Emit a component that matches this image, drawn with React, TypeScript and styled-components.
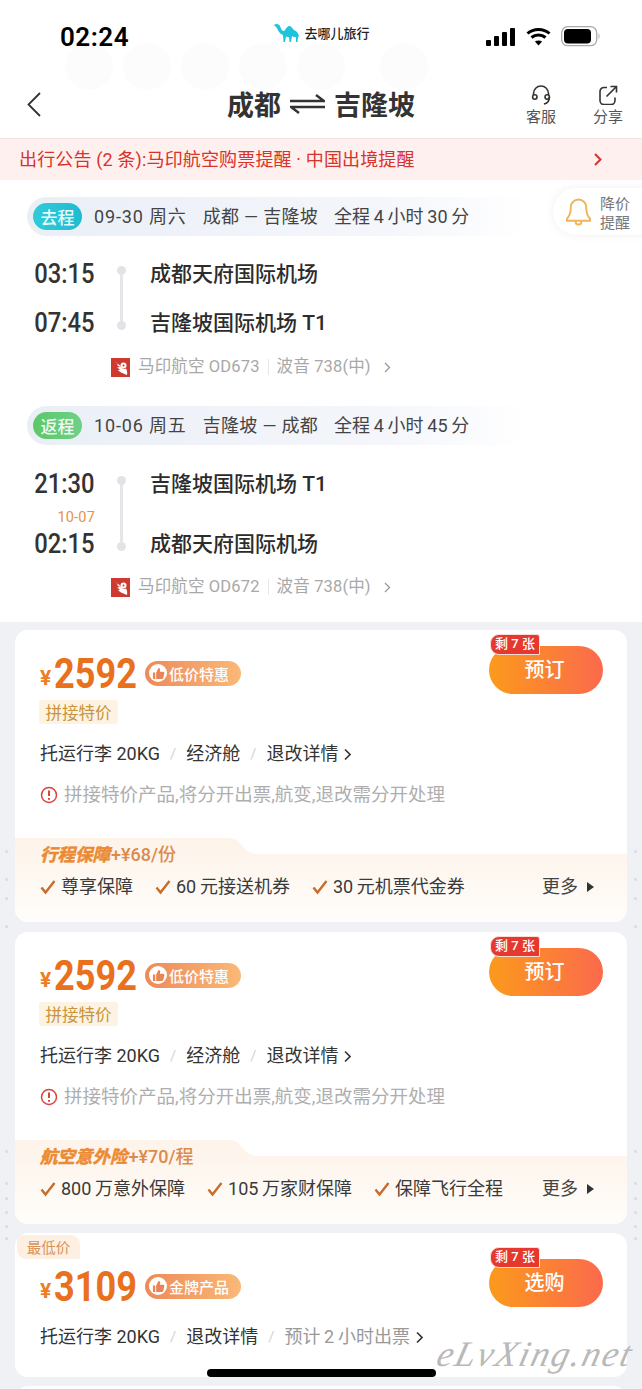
import React from "react";
import styled, { createGlobalStyle } from "styled-components";

const Global = createGlobalStyle`
  html, body { margin: 0; padding: 0; background: #fff; }
  body { font-family: Roboto, "Noto Sans CJK SC", sans-serif; -webkit-font-smoothing: antialiased; }
  * { box-sizing: border-box; }
`;

const Page = styled.div`
  position: relative;
  width: 642px;
  height: 1389px;
  overflow: hidden;
  background: #fff;
`;
const StatusBar = styled.div`
  position: relative;
  height: 60px;
  padding: 20px 41px 0 60px;
  display: flex;
  justify-content: space-between;
  align-items: flex-start;
`;
const Clock = styled.div`
  position: relative;
  font: 600 26px/34px Roboto, sans-serif;
  color: #000;
  letter-spacing: 0.5px;
`;
const Brand = styled.div`
  position: relative;
  display: flex;
  align-items: center;
  gap: 4px;
  margin: 2px 0 0 29px;
  font: 500 13px/22px "Noto Sans CJK SC", sans-serif;
  color: #222;
`;
const StatusIcons = styled.div`
  position: relative;
  display: flex;
  align-items: center;
  gap: 10px;
  padding-top: 6px;
`;
const Bubbles = styled.div`
  position: absolute;
  left: 65px;
  top: 43px;
  display: flex;
  gap: 10px;
`;
const Bubble = styled.div<{ $far?: boolean }>`
  width: 48px;
  height: 47px;
  border-radius: 50%;
  background: #fcfcfc;
  margin-left: ${(p) => (p.$far ? 25 : 0)}px;
`;
const Nav = styled.div`
  height: 78px;
  position: relative;
  display: flex;
  align-items: center;
  padding: 0 19px 0 27px;
`;
const BackIcon = styled.svg`
  margin-top: 10px;
  flex: none;
`;
const NavTitle = styled.div`
  flex: 1;
  display: flex;
  justify-content: center;
  align-items: center;
  gap: 9px;
  margin: 9px 0 0 112px;
  font: 700 27px/34px "Noto Sans CJK SC", sans-serif;
  color: #333;
`;
const NavAction = styled.div`
  width: 30px;
  margin-left: 37px;
  margin-top: 12px;
  display: flex;
  flex-direction: column;
  align-items: center;
  gap: 2px;
  font: 400 15px/18px "Noto Sans CJK SC", sans-serif;
  color: #555;
  white-space: nowrap;
`;
const Notice = styled.div`
  height: 42px;
  border-top: 1px solid #f3e2df;
  background: #fdf0ee;
  padding: 0 40px 0 19px;
  display: flex;
  align-items: center;
  justify-content: space-between;
  font: 400 18px/24px Roboto, "Noto Sans CJK SC", sans-serif;
  letter-spacing: 0.15px;
  color: #d8322c;
`;
const Trip = styled.div`
  position: relative;
  height: 442px;
  padding-top: 17px;
`;
const Pill = styled.div<{ $mt?: number }>`
  height: 39px;
  margin: ${(p) => p.$mt ?? 0}px 112px 0 27px;
  border-radius: 20px 0 0 20px;
  background: linear-gradient(90deg, #eaeff6 0%, #f4f6fb 70%, #ffffff 100%);
  display: flex;
  align-items: center;
  padding-left: 6px;
  font: 400 18px/24px Roboto, "Noto Sans CJK SC", sans-serif;
  color: #444;
  white-space: nowrap;
`;
const Badge = styled.span<{ $from: string; $to: string }>`
  width: 49px;
  height: 27px;
  border-radius: 14px;
  background: linear-gradient(90deg, ${(p) => p.$from}, ${(p) => p.$to});
  color: rgba(255, 255, 255, 0.92);
  text-align: center;
  font: 500 17px/27px "Noto Sans CJK SC", sans-serif;
  margin-right: 12px;
`;
const PillDate = styled.span`
  margin-right: 16px;
  letter-spacing: 0.85px;
`;
const PillRoute = styled.span`
  margin-right: 16px;
  letter-spacing: 0.3px;
`;
const Leg = styled.div<{ $h: number; $mt: number }>`
  height: ${(p) => p.$h}px;
  margin-top: ${(p) => p.$mt}px;
  display: flex;
`;
const Times = styled.div`
  position: relative;
  width: 95px;
  display: flex;
  flex-direction: column;
  justify-content: space-between;
  align-items: flex-end;
`;
const TimeText = styled.span`
  display: inline-block;
  transform: scaleX(0.88);
  transform-origin: right center;
  font: 500 27px/26px Roboto, sans-serif;
  color: #333;
`;
const NextDay = styled.span`
  position: absolute;
  right: 0;
  top: 39px;
  font: 400 14.5px/16px Roboto, sans-serif;
  color: #ea9147;
  letter-spacing: 0.2px;
`;
const Rail = styled.div`
  width: 12px;
  margin: 5px 0 6px 20px;
  display: flex;
  flex-direction: column;
  align-items: center;
`;
const Dot = styled.i`
  width: 9px;
  height: 9px;
  flex: none;
  border-radius: 50%;
  background: #e1e3e6;
`;
const RailLine = styled.i`
  flex: 1;
  width: 3px;
  background: #e4e6e9;
`;
const Names = styled.div`
  margin-left: 23px;
  display: flex;
  flex-direction: column;
  justify-content: space-between;
  font: 500 21px/26px Roboto, "Noto Sans CJK SC", sans-serif;
  color: #2c2c2c;
`;
const Meta = styled.div<{ $mt: number }>`
  margin: ${(p) => p.$mt}px 0 0 111px;
  height: 24px;
  display: flex;
  align-items: center;
  font: 400 16.5px/24px Roboto, "Noto Sans CJK SC", sans-serif;
  letter-spacing: 0.15px;
  color: #a8a8a8;
  white-space: nowrap;
`;
const AirlineName = styled.span`
  margin-left: 8px;
`;
const MetaDivider = styled.i`
  width: 1px;
  height: 16px;
  background: #e6e6e6;
  margin: 0 8px;
`;
const MetaChev = styled.svg`
  margin-left: 13px;
`;
const Remind = styled.div`
  position: absolute;
  left: 553px;
  top: 8px;
  width: 100px;
  height: 47px;
  border-radius: 24px 0 0 24px;
  background: #fff;
  box-shadow: 0 0 8px rgba(120, 120, 120, 0.12);
  display: flex;
  align-items: center;
  padding-left: 12px;
  gap: 8px;
  font: 400 15px/19px "Noto Sans CJK SC", sans-serif;
  color: #777;
`;
const List = styled.div`
  position: relative;
  background: #eff1f5;
  height: 767px;
  padding: 8px 15px 0;
  display: flex;
  flex-direction: column;
  gap: 10px;
`;
const EdgeMark = styled.i<{ $y: number; $right?: boolean }>`
  position: absolute;
  top: ${(p) => p.$y}px;
  ${(p) => (p.$right ? "right: 5px;" : "left: 5px;")}
  width: 3px;
  height: 3px;
  border-radius: 50%;
  background: #d8dbe1;
`;
const Card = styled.div<{ $h: number; $shift?: number }>`
  position: relative;
  height: ${(p) => p.$h}px;
  margin-top: ${(p) => p.$shift ?? 0}px;
  flex: none;
  border-radius: 13px;
  background: #fff;
  overflow: hidden;
  padding: 0 24px 0 25px;
`;
const TopRow = styled.div<{ $pt: number }>`
  padding-top: ${(p) => p.$pt}px;
  display: flex;
  justify-content: space-between;
  align-items: flex-start;
`;
const PriceCol = styled.div`
  padding-top: 5px;
`;
const PriceRow = styled.div<{ $mt?: number }>`
  display: flex;
  align-items: center;
  height: 44px;
  margin-top: ${(p) => p.$mt ?? 0}px;
`;
const Yen = styled.span`
  width: 14px;
  font: 700 21px/24px Roboto, sans-serif;
  color: #ee7d24;
  margin-top: 9px;
`;
const AmountBox = styled.span`
  width: 81px;
  margin-right: 10px;
`;
const Amount = styled.span`
  display: inline-block;
  transform: scaleX(0.84);
  transform-origin: left center;
  font: 700 43px/44px Roboto, sans-serif;
  color: #e9701c;
`;
const Promo = styled.span`
  height: 25px;
  width: 96px;
  border-radius: 13px;
  padding-left: 4px;
  background: linear-gradient(90deg, #ee8a58, #f9b978);
  display: flex;
  align-items: center;
  gap: 2px;
  font: 500 15px/25px "Noto Sans CJK SC", sans-serif;
  color: #fff;
  white-space: nowrap;
`;
const PromoIcon = styled.span`
  width: 18px;
  height: 18px;
  flex: none;
  border-radius: 50%;
  background: #fff;
  display: flex;
  align-items: center;
  justify-content: center;
`;
const SubTag = styled.div`
  width: 79px;
  height: 24px;
  margin-top: 5px;
  margin-left: -1px;
  border-radius: 3px;
  background: #fdf3e3;
  color: #c8943c;
  text-align: center;
  font: 400 16.5px/24px "Noto Sans CJK SC", sans-serif;
`;
const Book = styled.div`
  position: relative;
  width: 114px;
  height: 48px;
  padding-right: 3px;
  border-radius: 24px;
  background: linear-gradient(90deg, #fb9a1c, #fb6a4c);
  color: #fff;
  text-align: center;
  font: 500 20px/46px "Noto Sans CJK SC", sans-serif;
`;
const Left = styled.span`
  position: absolute;
  left: 1px;
  top: -12px;
  width: 50px;
  height: 21px;
  border-radius: 9px 3px 0 9px;
  background: #e5392f;
  border: 1px solid #fbdcd7;
  color: #fff;
  font: 500 13px/18px Roboto, "Noto Sans CJK SC", sans-serif;
`;
const InfoRow = styled.div<{ $mt: number }>`
  margin-top: ${(p) => p.$mt}px;
  height: 26px;
  display: flex;
  align-items: center;
  font: 400 18px/26px Roboto, "Noto Sans CJK SC", sans-serif;
  color: #333;
  white-space: nowrap;
`;
const RowChev = styled.svg`
  margin-left: 6px;
`;
const Slash = styled.span`
  color: #d4d4d4;
  font-size: 15px;
  margin: 0 10px;
`;
const Faint = styled.span`
  color: #999;
`;
const WarnRow = styled.div`
  margin-top: 15px;
  height: 26px;
  display: flex;
  align-items: center;
  gap: 6px;
  font: 400 18.5px/26px Roboto, "Noto Sans CJK SC", sans-serif;
  color: #aeaeae;
  white-space: nowrap;
`;
const Cover = styled.div`
  position: absolute;
  left: 0;
  right: 0;
  bottom: 0;
  height: 85px;
  padding: 5px 33px 0 25px;
`;
const CoverShape = styled.svg`
  position: absolute;
  inset: 0;
  width: 100%;
  height: 100%;
`;
const CoverTitle = styled.div`
  position: relative;
  display: flex;
  align-items: center;
  height: 26px;
  font: 500 18px/26px Roboto, "Noto Sans CJK SC", sans-serif;
  color: #dc8a4a;
`;
const CoverName = styled.span`
  font-size: 17.5px;
  font-weight: 700;
  font-style: italic;
  color: #ec8a33;
  -webkit-text-stroke: 0.5px #ec8a33;
  margin-right: 1px;
`;
const CoverRow = styled.div`
  position: relative;
  margin-top: 6px;
  height: 26px;
  display: flex;
  align-items: center;
  font: 400 18px/26px Roboto, "Noto Sans CJK SC", sans-serif;
  color: #3a3a3a;
  white-space: nowrap;
`;
const Perk = styled.span`
  display: flex;
  align-items: center;
  gap: 5px;
  margin-right: 22px;
`;
const More = styled.span`
  margin-left: auto;
  display: flex;
  align-items: center;
  gap: 9px;
  color: #444;
`;
const Flag = styled.div`
  position: absolute;
  left: 2px;
  top: 2px;
  width: 63px;
  height: 24px;
  border-radius: 0 9px 0 9px;
  background: #fdf0e3;
  color: #d99258;
  text-align: center;
  font: 400 14.5px/24px "Noto Sans CJK SC", sans-serif;
`;
const HomeBar = styled.div`
  position: absolute;
  left: 207px;
  top: 1369px;
  width: 229px;
  height: 8px;
  border-radius: 4px;
  background: #000;
`;
const Watermark = styled.div`
  position: absolute;
  left: 438px;
  top: 1332px;
  transform: skewX(-14deg);
  font: italic 400 36px/44px "Liberation Serif", serif;
  letter-spacing: 2px;
  color: #b9b9b9;
  white-space: nowrap;
`;

const CheckMark = () => (
  <svg width="16" height="16" viewBox="0 0 16 16" fill="none" stroke="#c96c2b" strokeWidth="2.4">
    <path d="M1.500 8.500l4 5L14.500 2" />
  </svg>
);
const Thumb = () => (
  <svg width="13" height="13" viewBox="0 0 14 14" fill="#ec8354">
    <path d="M1 6h2.500v7H1zM4.500 6l2.500-5c1.400 0 2 1 1.800 2.300L8.500 5H12c1 0 1.500.8 1.300 1.700l-1.100 5c-.2.800-.8 1.300-1.600 1.300H4.500z" />
  </svg>
);
const AirlineLogo = () => (
  <svg width="19" height="19" viewBox="0 0 19 19">
    <rect width="19" height="19" fill="#cf3a30" />
    <circle cx="12.500" cy="7.500" r="3" fill="#fff" />
    <path d="M3 3l4 3-1 1 3 2-3 .5 3 2-2 .8 3 2.200 6 2.500c.5-3 0-5-1-6.500-2 1-5 0-6-3C7 6 5 4 3 3z" fill="#fff" />
    <circle cx="12.500" cy="7.500" r="1" fill="#cf3a30" />
  </svg>
);
const SmallChev = () => (
  <MetaChev width="7" height="11" viewBox="0 0 7 11" fill="none" stroke="#999" strokeWidth="1.300">
    <path d="M1 1l4.500 4.500L1 10" />
  </MetaChev>
);
const DarkChev = () => (
  <RowChev width="7" height="13" viewBox="0 0 7 13" fill="none" stroke="#333" strokeWidth="1.600">
    <path d="M1 1.500l5 5-5 5" />
  </RowChev>
);

const RouteLeg = ({ h, mt, dep, arr, next, from, to }: { h: number; mt: number; dep: string; arr: string; next?: string; from: string; to: string }) => (
  <Leg $h={h} $mt={mt}>
    <Times>
      <TimeText>{dep}</TimeText>
      {next && <NextDay>{next}</NextDay>}
      <TimeText>{arr}</TimeText>
    </Times>
    <Rail>
      <Dot />
      <RailLine />
      <Dot />
    </Rail>
    <Names>
      <span>{from}</span>
      <span>{to}</span>
    </Names>
  </Leg>
);

const Carrier = ({ mt, flight }: { mt: number; flight: string }) => (
  <Meta $mt={mt}>
    <AirlineLogo />
    <AirlineName>马印航空 {flight}</AirlineName>
    <MetaDivider />
    波音 738(中)
    <SmallChev />
  </Meta>
);

const PriceCard = ({ id, title, fee, perks }: { id: string; title: string; fee: string; perks: string[] }) => (
  <Card $h={292}>
    <TopRow $pt={16}>
      <PriceCol>
        <PriceRow>
          <Yen>¥</Yen>
          <AmountBox><Amount>2592</Amount></AmountBox>
          <Promo>
            <PromoIcon><Thumb /></PromoIcon>
            低价特惠
          </Promo>
        </PriceRow>
        <SubTag>拼接特价</SubTag>
      </PriceCol>
      <Book>
        <Left>剩 7 张</Left>
        预订
      </Book>
    </TopRow>
    <InfoRow $mt={17}>
      托运行李 20KG<Slash>/</Slash>经济舱<Slash>/</Slash>退改详情<DarkChev />
    </InfoRow>
    <WarnRow>
      <svg width="18" height="18" viewBox="0 0 18 18" fill="none">
        <circle cx="9" cy="9" r="7.500" stroke="#d8433b" strokeWidth="1.500" />
        <path d="M9 4.500v5.500M9 12v1.800" stroke="#d8433b" strokeWidth="2" />
      </svg>
      拼接特价产品,将分开出票,航变,退改需分开处理
    </WarnRow>
    <Cover>
      <CoverShape viewBox="0 0 612 85" preserveAspectRatio="none">
        <defs>
          <linearGradient id={id} x1="0" y1="0" x2="0" y2="1">
            <stop offset="0" stopColor="#fdf3e9" />
            <stop offset="1" stopColor="#fffdfb" />
          </linearGradient>
        </defs>
        <path d="M0 1H214c14 0 12 16 30 16H612V85H0z" fill={`url(#${id})`} />
      </CoverShape>
      <CoverTitle>
        <CoverName>{title}</CoverName>
        {fee}
      </CoverTitle>
      <CoverRow>
        {perks.map((t) => (
          <Perk key={t}>
            <CheckMark />
            {t}
          </Perk>
        ))}
        <More>
          更多
          <svg width="7" height="10" viewBox="0 0 7 10" fill="#333"><path d="M0 0l7 5-7 5z" /></svg>
        </More>
      </CoverRow>
    </Cover>
  </Card>
);

const marks = [228, 256, 275, 303, 528, 560, 575, 589, 603, 615];

export default function App() {
  return (
    <Page>
      <Global />
      <StatusBar>
        <Bubbles>
          {[0, 1, 2, 3, 4].map((i) => <Bubble key={i} />)}
          <Bubble $far />
        </Bubbles>
        <Clock>02:24</Clock>
        <Brand>
          <svg width="26" height="20" viewBox="0 0 26 20" fill="#1ec4dc">
            <path d="M0 2C2 0 5 1 6 3c1 3 2 5 4 5 1 0 2-4 5-5 2-.5 3 2 5 4 2 1 4 2 5 6l-1 1-.5 5H22l0-5c-2 0-3 0-4-1l-1 6h-1.500L15 14c-1 0-2 0-3-.5L11 19H9.500L9 12C6 11 4 8 3 5 2 4 1 3 0 2z" />
          </svg>
          去哪儿旅行
        </Brand>
        <StatusIcons>
          <svg width="30" height="20" viewBox="0 0 30 20" fill="#000">
            <rect x="0" y="13" width="5" height="6" rx="1" />
            <rect x="8" y="9" width="5" height="10" rx="1" />
            <rect x="16" y="5" width="5" height="14" rx="1" />
            <rect x="24" y="1" width="5" height="18" rx="1" />
          </svg>
          <svg width="25" height="19" viewBox="0 0 25 19" fill="none" stroke="#000" strokeWidth="3">
            <path d="M1.500 6.500c6-5.500 16-5.500 22 0M5.500 10.500c4-3.500 10-3.500 14 0" />
            <path d="M12.500 18.500l-3.600-4c2-1.500 5.200-1.500 7.200 0z" fill="#000" stroke="none" />
          </svg>
          <svg width="40" height="21" viewBox="0 0 40 21" fill="none">
            <rect x="0.700" y="0.700" width="35" height="19" rx="6" stroke="#aaa" strokeWidth="1.300" />
            <rect x="3" y="3" width="27" height="14.500" rx="4" fill="#000" />
            <path d="M37.500 7.500c1.300.5 1.300 5 0 5.500z" fill="#aaa" />
          </svg>
        </StatusIcons>
      </StatusBar>
      <Nav>
        <BackIcon width="14" height="25" viewBox="0 0 14 25" fill="none" stroke="#333" strokeWidth="1.800">
          <path d="M13 1L1.500 12.500 13 24" />
        </BackIcon>
        <NavTitle>
          成都
          <svg width="35" height="20" viewBox="0 0 35 20" fill="none" stroke="#333" strokeWidth="2.400">
            <path d="M0 7h34L26 1M35 13H1l8 6" />
          </svg>
          吉隆坡
        </NavTitle>
        <NavAction>
          <svg width="20" height="20" viewBox="0 0 20 20" fill="none" stroke="#333" strokeWidth="1.600">
            <path d="M2.500 10V8.500a7.500 7.500 0 0115 0V10" />
            <circle cx="3.800" cy="12" r="2.200" />
            <circle cx="16.200" cy="12" r="2.200" />
            <path d="M18.400 12c0 4-2 6.500-5.500 7" />
          </svg>
          客服
        </NavAction>
        <NavAction>
          <svg width="20" height="20" viewBox="0 0 20 20" fill="none" stroke="#333" strokeWidth="1.600">
            <path d="M9 2.500H6a4 4 0 00-4 4v9a4 4 0 004 4h7a4 4 0 004-4v-3" />
            <path d="M8.500 11.500L18.500 1.500M12.500 1.500h6v6" />
          </svg>
          分享
        </NavAction>
      </Nav>
      <Notice>
        出行公告 (2 条):马印航空购票提醒 · 中国出境提醒
        <svg width="8" height="13" viewBox="0 0 8 13" fill="none" stroke="#d8322c" strokeWidth="2">
          <path d="M1 1l5.500 5.500L1 12" />
        </svg>
      </Notice>
      <Trip>
        <Remind>
          <svg width="27" height="30" viewBox="0 0 28 30" fill="none" stroke="#efb55a" strokeWidth="2">
            <path d="M14 2a8 8 0 00-8 8c0 7-2 10-4 12v2h24v-2c-2-2-4-5-4-12a8 8 0 00-8-8zM11 25c0 4 6 4 6 0" />
          </svg>
          <span>降价<br />提醒</span>
        </Remind>
        <Pill>
          <Badge $from="#2fcbd9" $to="#1fbcd2">去程</Badge>
          <PillDate>09-30 周六</PillDate>
          <PillRoute>成都 — 吉隆坡</PillRoute>
          全程{"\u2009"}4{"\u2009"}小时{"\u2009"}30{"\u2009"}分
        </Pill>
        <RouteLeg h={75} mt={25} dep="03:15" arr="07:45" from="成都天府国际机场" to="吉隆坡国际机场 T1" />
        <Carrier mt={19} flight="OD673" />
        <Pill $mt={27}>
          <Badge $from="#5cc868" $to="#6fd088">返程</Badge>
          <PillDate>10-06 周五</PillDate>
          <PillRoute>吉隆坡 — 成都</PillRoute>
          全程{"\u2009"}4{"\u2009"}小时{"\u2009"}45{"\u2009"}分
        </Pill>
        <RouteLeg h={86} mt={26} dep="21:30" arr="02:15" next="10-07" from="吉隆坡国际机场 T1" to="成都天府国际机场" />
        <Carrier mt={18} flight="OD672" />
      </Trip>
      <List>
        {marks.map((y) => <EdgeMark key={y} $y={y} />)}
        {marks.map((y) => <EdgeMark key={`r${y}`} $y={y} $right />)}
        <PriceCard id="cover-a" title="行程保障" fee="+¥68/份" perks={["尊享保障", "60\u2009元接送机券", "30\u2009元机票代金券"]} />
        <PriceCard id="cover-b" title="航空意外险" fee="+¥70/程" perks={["800\u2009万意外保障", "105\u2009万家财保障", "保障飞行全程"]} />
        <Card $h={144} $shift={-1}>
          <Flag>最低价</Flag>
          <TopRow $pt={26}>
            <PriceRow $mt={5}>
              <Yen>¥</Yen>
              <AmountBox><Amount>3109</Amount></AmountBox>
              <Promo>
                <PromoIcon><Thumb /></PromoIcon>
                金牌产品
              </Promo>
            </PriceRow>
            <Book>
              <Left>剩 7 张</Left>
              选购
            </Book>
          </TopRow>
          <InfoRow $mt={16}>
            托运行李 20KG<Slash>/</Slash>退改详情<Slash>/</Slash><Faint>预计{"\u2009"}2{"\u2009"}小时出票</Faint><DarkChev />
          </InfoRow>
        </Card>
        <Card $h={60} $shift={-1} />
      </List>
      <HomeBar />
      <Watermark>eLvXing.net</Watermark>
    </Page>
  );
}
